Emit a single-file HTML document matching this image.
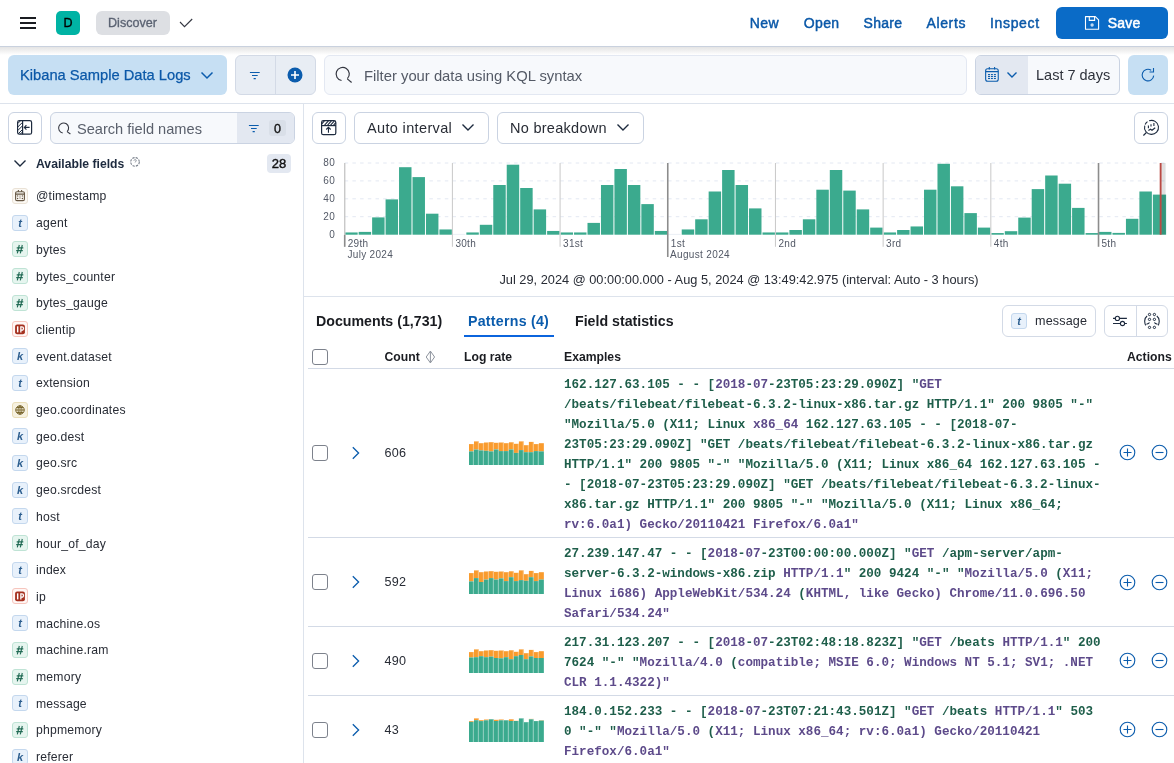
<!DOCTYPE html><html><head><meta charset="utf-8"><style>
*{box-sizing:border-box;margin:0;padding:0}
html,body{width:1174px;height:763px;overflow:hidden;background:#fff;font-family:"Liberation Sans", sans-serif;color:#1D2A3E}
.a{position:absolute}
#root{position:absolute;left:0;top:0;width:1174px;height:763px;overflow:hidden;will-change:transform;background:#fff}
.t{position:absolute;white-space:pre;line-height:1}
.btn{position:absolute;border:1px solid #CAD3E2;border-radius:6px;background:#fff}
.mono{font-family:"Liberation Mono", monospace;font-weight:700;font-size:12.6px;line-height:20px;white-space:pre;color:#1E5E4A}
.mono b{color:#5D4A8A;font-weight:700}
</style></head><body><div id="root"><div class="a" style="left:0;top:0;width:1174px;height:46px;background:#fff"></div>
<div class="a" style="left:20px;top:17.0px;width:16.3px;height:1.8px;background:#1A1C21"></div>
<div class="a" style="left:20px;top:22.1px;width:16.3px;height:1.8px;background:#1A1C21"></div>
<div class="a" style="left:20px;top:27.2px;width:16.3px;height:1.8px;background:#1A1C21"></div>
<div class="a" style="left:56px;top:11px;width:24px;height:24px;border-radius:5px;background:#00B3A4"></div>
<div class="t" style="left:56px;top:17px;width:24px;text-align:center;font-size:12.5px;-webkit-text-stroke:0.35px #000;color:#000">D</div>
<div class="a" style="left:96px;top:11px;width:74px;height:24px;border-radius:6px;background:#DDDFE3"></div>
<div class="t" style="left:108px;top:17px;font-size:12.6px;-webkit-text-stroke:0.3px #5A6272;color:#5A6272">Discover</div>
<svg class="a" style="left:178px;top:16px" width="16" height="14" viewBox="0 0 16 14"><path d="M2 6 L6.5 10.6 L14.2 3" fill="none" stroke="#343741" stroke-width="1.1"/></svg>
<div class="t" style="left:749.7px;top:16px;font-size:14px;letter-spacing:0.45px;-webkit-text-stroke:0.45px #0A58A8;color:#0A58A8">New</div>
<div class="t" style="left:803.7px;top:16px;font-size:14px;letter-spacing:0.4px;-webkit-text-stroke:0.45px #0A58A8;color:#0A58A8">Open</div>
<div class="t" style="left:863.5px;top:16px;font-size:14px;letter-spacing:0.3px;-webkit-text-stroke:0.45px #0A58A8;color:#0A58A8">Share</div>
<div class="t" style="left:926.4000000000001px;top:16px;font-size:14px;letter-spacing:0.65px;-webkit-text-stroke:0.45px #0A58A8;color:#0A58A8">Alerts</div>
<div class="t" style="left:990.0px;top:16px;font-size:14px;letter-spacing:0.65px;-webkit-text-stroke:0.45px #0A58A8;color:#0A58A8">Inspect</div>
<div class="a" style="left:1056px;top:7px;width:112px;height:32px;border-radius:6px;background:#0A6BC7"></div>
<svg class="a" style="left:1084px;top:15px" width="16" height="16" viewBox="0 0 16 16"><path d="M1.5 1.6H11.3L14.6 4.9V14.3H1.5Z" fill="none" stroke="#fff" stroke-width="1.1" stroke-linejoin="round"/><path d="M5.3 1.6V5.4H10.6V1.6" fill="none" stroke="#fff" stroke-width="1.1"/><circle cx="8.1" cy="10" r="1.7" fill="#fff" fill-opacity="0.75"/></svg>
<div class="t" style="left:1107.7px;top:16px;font-size:14px;letter-spacing:0.2px;-webkit-text-stroke:0.5px #fff;color:#fff">Save</div>
<div class="a" style="left:0;top:46px;width:1174px;height:1px;background:#C9D1DE"></div>
<div class="a" style="left:0;top:47px;width:1174px;height:8px;background:linear-gradient(#E4E4E4,#FFFFFF)"></div>
<div class="a" style="left:8px;top:55px;width:219px;height:40px;border-radius:6px;background:#C6DFF3"></div>
<div class="t" style="left:20px;top:68px;font-size:14.7px;color:#0B58A8;-webkit-text-stroke:0.25px #0B58A8">Kibana Sample Data Logs</div>
<svg class="a" style="left:200px;top:70px" width="14" height="10" viewBox="0 0 14 10"><path d="M1.5 2.5 L7 8 L12.5 2.5" fill="none" stroke="#0B5CAD" stroke-width="1.5"/></svg>
<div class="a" style="left:235px;top:55px;width:81px;height:40px;border-radius:6px;background:#E8EDF4;border:1px solid #D3DAE6"></div>
<div class="a" style="left:275px;top:56px;width:1px;height:38px;background:#D3DAE6"></div>
<svg class="a" style="left:249px;top:71px" width="12" height="10" viewBox="0 0 12 10"><path d="M0.9 1.5h9.8M3 4.5h5.7M4.6 7.6h2.2" stroke="#0B5CAD" stroke-width="1.1"/></svg>
<svg class="a" style="left:287px;top:67px" width="16" height="16" viewBox="0 0 16 16"><circle cx="8" cy="8" r="7.5" fill="#0B5CAD"/><path d="M8 4v8M4 8h8" stroke="#fff" stroke-width="1.6"/></svg>
<div class="a" style="left:324px;top:55px;width:643px;height:40px;border-radius:6px;background:#F7F9FC;border:1px solid #E3E8F2"></div>
<svg class="a" style="left:334px;top:66px" width="20" height="20" viewBox="0 0 20 20"><path d="M7.55 14.5 A6.6 6.6 0 1 1 13.37 12.67" fill="none" stroke="#343741" stroke-width="1.2"/><path d="M13.3 12.9 L17.6 16.5" stroke="#343741" stroke-width="1.2"/></svg>
<div class="t" style="left:364px;top:69px;font-size:14.8px;color:#545A66">Filter your data using KQL syntax</div>
<div class="a" style="left:975px;top:55px;width:145px;height:40px;border-radius:6px;background:#F7F9FC;border:1px solid #CAD3E2;overflow:hidden"><div class="a" style="left:0;top:0;width:52px;height:38px;background:#E3E8F1"></div></div>
<svg class="a" style="left:984px;top:66px" width="16" height="17" viewBox="0 0 16 17"><rect x="1.65" y="2.75" width="12.6" height="12.5" rx="2" fill="none" stroke="#0B5CAD" stroke-width="1.1"/><path d="M1.65 5.6h12.6M5.3 1v2.6M10.6 1v2.6" stroke="#0B5CAD" stroke-width="1.1"/><rect x="4.0" y="8.05" width="2" height="1.1" fill="#0B5CAD"/><rect x="6.9" y="8.05" width="2" height="1.1" fill="#0B5CAD"/><rect x="9.9" y="8.05" width="2" height="1.1" fill="#0B5CAD"/><rect x="4.0" y="9.95" width="2" height="1.1" fill="#0B5CAD"/><rect x="6.9" y="9.95" width="2" height="1.1" fill="#0B5CAD"/><rect x="9.9" y="9.95" width="2" height="1.1" fill="#0B5CAD"/><rect x="4.0" y="11.95" width="2" height="1.1" fill="#0B5CAD"/><rect x="6.9" y="11.95" width="2" height="1.1" fill="#0B5CAD"/><rect x="9.9" y="11.95" width="2" height="1.1" fill="#0B5CAD"/></svg>
<svg class="a" style="left:1006px;top:71px" width="12" height="8" viewBox="0 0 12 8"><path d="M1.5 1.5 L6 6 L10.5 1.5" fill="none" stroke="#0B5CAD" stroke-width="1.4"/></svg>
<div class="t" style="left:1036px;top:68px;font-size:14.5px;color:#2E323B">Last 7 days</div>
<div class="a" style="left:1128px;top:55px;width:40px;height:40px;border-radius:6px;background:#C6DFF3"></div>
<svg class="a" style="left:1140px;top:67px" width="16" height="16" viewBox="0 0 16 16"><path d="M13.7 8.6A5.8 5.8 0 1 1 11.2 3.3" fill="none" stroke="#0B5CAD" stroke-width="1.1"/><path d="M13.5 1.1V5H9.5" fill="none" stroke="#0B5CAD" stroke-width="1.1"/></svg>
<div class="a" style="left:0;top:103px;width:1174px;height:1px;background:#DDE3EC"></div>
<div class="a" style="left:303px;top:104px;width:1px;height:659px;background:#DDE3EC"></div>
<div class="btn" style="left:8px;top:112px;width:34px;height:32px"></div>
<svg class="a" style="left:16px;top:119px" width="18" height="18" viewBox="0 0 18 18"><rect x="1.6" y="1.6" width="14" height="13.6" rx="1.8" fill="none" stroke="#1D2A3E" stroke-width="1.2"/><path d="M6.6 1.6v13.6" stroke="#1D2A3E" stroke-width="1.2"/><path d="M1.8 4.5l2.5-2.5M1.8 8l4.5-4.5M1.8 11.5l4.5-4.5M2.2 14.8l4.1-4.1M4.5 14.9l1.8-1.8" stroke="#1D2A3E" stroke-width="1"/><path d="M13.6 8.4H8.3M10.4 6.2L8.3 8.4l2.1 2.2" fill="none" stroke="#1D2A3E" stroke-width="1.1"/></svg>
<div class="a" style="left:50px;top:112px;width:245px;height:32px;border-radius:6px;background:#F7F9FC;border:1px solid #CAD3E2;overflow:hidden"><div class="a" style="left:186px;top:0;width:58px;height:30px;background:#E3E8F1"></div></div>
<svg class="a" style="left:57px;top:120px" width="15" height="15" viewBox="0 0 15 15"><path d="M5.73 12.92 A5 5 0 1 1 10.14 11.54" fill="none" stroke="#343741" stroke-width="1.1"/><path d="M10.1 11.6 L13.4 14" stroke="#343741" stroke-width="1.1"/></svg>
<div class="t" style="left:77px;top:122px;font-size:14.6px;color:#5A606C">Search field names</div>
<svg class="a" style="left:248px;top:124px" width="12" height="10" viewBox="0 0 12 10"><path d="M0.9 1.5h9.8M3 4.5h5.7M4.6 7.6h2.2" stroke="#0B5CAD" stroke-width="1.1"/></svg>
<div class="a" style="left:269px;top:120px;width:17px;height:16px;border-radius:3px;background:#D9DFE8"></div>
<div class="t" style="left:269px;top:122.5px;width:17px;text-align:center;font-size:12.5px;-webkit-text-stroke:0.35px #111;color:#111">0</div>
<svg class="a" style="left:13px;top:158px" width="14" height="10" viewBox="0 0 14 10"><path d="M1.5 2.5 L7 8 L12.5 2.5" fill="none" stroke="#1D2A3E" stroke-width="1.4"/></svg>
<div class="t" style="left:36px;top:158px;font-size:12.2px;font-weight:700;color:#1D2A3E">Available fields</div>
<svg class="a" style="left:130px;top:157px" width="10" height="10" viewBox="0 0 10 10"><circle cx="5" cy="4.9" r="4.3" fill="none" stroke="#7A818C" stroke-width="1.1" stroke-dasharray="2.3 1.1"/><path d="M3.9 3.6c0.2-1.3 2.4-1.3 2.3 0.1 0 0.8-1 0.9-1 1.7" fill="none" stroke="#7A818C" stroke-width="0.9"/></svg>
<div class="a" style="left:267px;top:154px;width:24px;height:19px;border-radius:4px;background:#E3E8F1"></div>
<div class="t" style="left:267px;top:157.2px;width:24px;text-align:center;font-size:13px;-webkit-text-stroke:0.4px #111;color:#111">28</div>
<div class="a" style="left:12px;top:187.9px;width:16px;height:16px;border-radius:3px;background:#FBF8F3;border:1px solid #EAE2D6"></div><svg class="a" style="left:12px;top:187.9px" width="16" height="16" viewBox="0 0 16 16"><rect x="3.6" y="3.7" width="8.8" height="8.9" rx="1.4" fill="none" stroke="#665744" stroke-width="1.1"/><path d="M3.6 6.1H12.4M6.4 2.1V3.8M9.6 2.1V3.8" stroke="#665744" stroke-width="1.1"/><circle cx="5.6" cy="7.9" r="0.7" fill="#665744"/><circle cx="10.4" cy="7.9" r="0.7" fill="#665744"/><circle cx="5.6" cy="10.5" r="0.7" fill="#665744"/><circle cx="10.4" cy="10.5" r="0.7" fill="#665744"/><rect x="7.3" y="7.2" width="1.4" height="3.8" fill="#C2BAAF"/></svg>
<div class="t" style="left:36px;top:190.4px;font-size:12.2px;letter-spacing:0.2px;color:#282C35">@timestamp</div>
<div class="a" style="left:12px;top:214.6px;width:16px;height:16px;border-radius:3px;background:#E8F1FB;border:1px solid #C4D8EE"></div><div class="t" style="left:12px;top:217.6px;width:16px;text-align:center;font-size:11px;font-weight:700;font-style:italic;color:#2C5E8F">t</div>
<div class="t" style="left:36px;top:217.1px;font-size:12.2px;letter-spacing:0.2px;color:#282C35">agent</div>
<div class="a" style="left:12px;top:241.3px;width:16px;height:16px;border-radius:3px;background:#E6F5EF;border:1px solid #BFE3D5"></div><svg class="a" style="left:12px;top:241.3px" width="16" height="16" viewBox="0 0 16 16"><path d="M7.3 4L5.3 12.3M10.3 4L8.3 12.3M4.7 6.8H11.3M4.2 9.6H10.8" stroke="#226B55" stroke-width="1.15"/></svg>
<div class="t" style="left:36px;top:243.8px;font-size:12.2px;letter-spacing:0.2px;color:#282C35">bytes</div>
<div class="a" style="left:12px;top:268.0px;width:16px;height:16px;border-radius:3px;background:#E6F5EF;border:1px solid #BFE3D5"></div><svg class="a" style="left:12px;top:268.0px" width="16" height="16" viewBox="0 0 16 16"><path d="M7.3 4L5.3 12.3M10.3 4L8.3 12.3M4.7 6.8H11.3M4.2 9.6H10.8" stroke="#226B55" stroke-width="1.15"/></svg>
<div class="t" style="left:36px;top:270.5px;font-size:12.2px;letter-spacing:0.2px;color:#282C35">bytes_counter</div>
<div class="a" style="left:12px;top:294.7px;width:16px;height:16px;border-radius:3px;background:#E6F5EF;border:1px solid #BFE3D5"></div><svg class="a" style="left:12px;top:294.7px" width="16" height="16" viewBox="0 0 16 16"><path d="M7.3 4L5.3 12.3M10.3 4L8.3 12.3M4.7 6.8H11.3M4.2 9.6H10.8" stroke="#226B55" stroke-width="1.15"/></svg>
<div class="t" style="left:36px;top:297.2px;font-size:12.2px;letter-spacing:0.2px;color:#282C35">bytes_gauge</div>
<div class="a" style="left:12px;top:321.4px;width:16px;height:16px;border-radius:3px;background:#FFF6F4;border:1px solid #F6C5BD"></div><svg class="a" style="left:12px;top:321.4px" width="16" height="16" viewBox="0 0 16 16"><rect x="3.1" y="3.6" width="9.8" height="9.7" rx="2" fill="#A5301F"/><rect x="4.95" y="5.3" width="1.45" height="6.1" fill="#fff"/><path d="M8.85 11.4V5.95H9.9A1.6 1.6 0 0 1 9.9 9.15H8.85" fill="none" stroke="#fff" stroke-width="1.3"/></svg>
<div class="t" style="left:36px;top:323.9px;font-size:12.2px;letter-spacing:0.2px;color:#282C35">clientip</div>
<div class="a" style="left:12px;top:348.1px;width:16px;height:16px;border-radius:3px;background:#E8F1FB;border:1px solid #C4D8EE"></div><div class="t" style="left:12px;top:351.1px;width:16px;text-align:center;font-size:11px;font-weight:700;font-style:italic;color:#2C5E8F">k</div>
<div class="t" style="left:36px;top:350.6px;font-size:12.2px;letter-spacing:0.2px;color:#282C35">event.dataset</div>
<div class="a" style="left:12px;top:374.8px;width:16px;height:16px;border-radius:3px;background:#E8F1FB;border:1px solid #C4D8EE"></div><div class="t" style="left:12px;top:377.8px;width:16px;text-align:center;font-size:11px;font-weight:700;font-style:italic;color:#2C5E8F">t</div>
<div class="t" style="left:36px;top:377.3px;font-size:12.2px;letter-spacing:0.2px;color:#282C35">extension</div>
<div class="a" style="left:12px;top:401.5px;width:16px;height:16px;border-radius:3px;background:#F6F1E0;border:1px solid #E9DDB8"></div><svg class="a" style="left:15px;top:404.5px" width="10" height="10" viewBox="0 0 10 10"><circle cx="5" cy="5" r="4.2" fill="none" stroke="#6F5A1E" stroke-width="1"/><path d="M0.8 5h8.4M5 0.8v8.4M2 2.5h6M2 7.5h6" stroke="#6F5A1E" stroke-width="0.8"/><ellipse cx="5" cy="5" rx="2" ry="4.2" fill="none" stroke="#6F5A1E" stroke-width="0.8"/></svg>
<div class="t" style="left:36px;top:404.0px;font-size:12.2px;letter-spacing:0.2px;color:#282C35">geo.coordinates</div>
<div class="a" style="left:12px;top:428.2px;width:16px;height:16px;border-radius:3px;background:#E8F1FB;border:1px solid #C4D8EE"></div><div class="t" style="left:12px;top:431.2px;width:16px;text-align:center;font-size:11px;font-weight:700;font-style:italic;color:#2C5E8F">k</div>
<div class="t" style="left:36px;top:430.7px;font-size:12.2px;letter-spacing:0.2px;color:#282C35">geo.dest</div>
<div class="a" style="left:12px;top:454.9px;width:16px;height:16px;border-radius:3px;background:#E8F1FB;border:1px solid #C4D8EE"></div><div class="t" style="left:12px;top:457.9px;width:16px;text-align:center;font-size:11px;font-weight:700;font-style:italic;color:#2C5E8F">k</div>
<div class="t" style="left:36px;top:457.4px;font-size:12.2px;letter-spacing:0.2px;color:#282C35">geo.src</div>
<div class="a" style="left:12px;top:481.6px;width:16px;height:16px;border-radius:3px;background:#E8F1FB;border:1px solid #C4D8EE"></div><div class="t" style="left:12px;top:484.6px;width:16px;text-align:center;font-size:11px;font-weight:700;font-style:italic;color:#2C5E8F">k</div>
<div class="t" style="left:36px;top:484.1px;font-size:12.2px;letter-spacing:0.2px;color:#282C35">geo.srcdest</div>
<div class="a" style="left:12px;top:508.3px;width:16px;height:16px;border-radius:3px;background:#E8F1FB;border:1px solid #C4D8EE"></div><div class="t" style="left:12px;top:511.3px;width:16px;text-align:center;font-size:11px;font-weight:700;font-style:italic;color:#2C5E8F">t</div>
<div class="t" style="left:36px;top:510.8px;font-size:12.2px;letter-spacing:0.2px;color:#282C35">host</div>
<div class="a" style="left:12px;top:535.0px;width:16px;height:16px;border-radius:3px;background:#E6F5EF;border:1px solid #BFE3D5"></div><svg class="a" style="left:12px;top:535.0px" width="16" height="16" viewBox="0 0 16 16"><path d="M7.3 4L5.3 12.3M10.3 4L8.3 12.3M4.7 6.8H11.3M4.2 9.6H10.8" stroke="#226B55" stroke-width="1.15"/></svg>
<div class="t" style="left:36px;top:537.5px;font-size:12.2px;letter-spacing:0.2px;color:#282C35">hour_of_day</div>
<div class="a" style="left:12px;top:561.7px;width:16px;height:16px;border-radius:3px;background:#E8F1FB;border:1px solid #C4D8EE"></div><div class="t" style="left:12px;top:564.7px;width:16px;text-align:center;font-size:11px;font-weight:700;font-style:italic;color:#2C5E8F">t</div>
<div class="t" style="left:36px;top:564.2px;font-size:12.2px;letter-spacing:0.2px;color:#282C35">index</div>
<div class="a" style="left:12px;top:588.4px;width:16px;height:16px;border-radius:3px;background:#FFF6F4;border:1px solid #F6C5BD"></div><svg class="a" style="left:12px;top:588.4px" width="16" height="16" viewBox="0 0 16 16"><rect x="3.1" y="3.6" width="9.8" height="9.7" rx="2" fill="#A5301F"/><rect x="4.95" y="5.3" width="1.45" height="6.1" fill="#fff"/><path d="M8.85 11.4V5.95H9.9A1.6 1.6 0 0 1 9.9 9.15H8.85" fill="none" stroke="#fff" stroke-width="1.3"/></svg>
<div class="t" style="left:36px;top:590.9px;font-size:12.2px;letter-spacing:0.2px;color:#282C35">ip</div>
<div class="a" style="left:12px;top:615.1px;width:16px;height:16px;border-radius:3px;background:#E8F1FB;border:1px solid #C4D8EE"></div><div class="t" style="left:12px;top:618.1px;width:16px;text-align:center;font-size:11px;font-weight:700;font-style:italic;color:#2C5E8F">t</div>
<div class="t" style="left:36px;top:617.6px;font-size:12.2px;letter-spacing:0.2px;color:#282C35">machine.os</div>
<div class="a" style="left:12px;top:641.8px;width:16px;height:16px;border-radius:3px;background:#E6F5EF;border:1px solid #BFE3D5"></div><svg class="a" style="left:12px;top:641.8px" width="16" height="16" viewBox="0 0 16 16"><path d="M7.3 4L5.3 12.3M10.3 4L8.3 12.3M4.7 6.8H11.3M4.2 9.6H10.8" stroke="#226B55" stroke-width="1.15"/></svg>
<div class="t" style="left:36px;top:644.3px;font-size:12.2px;letter-spacing:0.2px;color:#282C35">machine.ram</div>
<div class="a" style="left:12px;top:668.5px;width:16px;height:16px;border-radius:3px;background:#E6F5EF;border:1px solid #BFE3D5"></div><svg class="a" style="left:12px;top:668.5px" width="16" height="16" viewBox="0 0 16 16"><path d="M7.3 4L5.3 12.3M10.3 4L8.3 12.3M4.7 6.8H11.3M4.2 9.6H10.8" stroke="#226B55" stroke-width="1.15"/></svg>
<div class="t" style="left:36px;top:671.0px;font-size:12.2px;letter-spacing:0.2px;color:#282C35">memory</div>
<div class="a" style="left:12px;top:695.2px;width:16px;height:16px;border-radius:3px;background:#E8F1FB;border:1px solid #C4D8EE"></div><div class="t" style="left:12px;top:698.2px;width:16px;text-align:center;font-size:11px;font-weight:700;font-style:italic;color:#2C5E8F">t</div>
<div class="t" style="left:36px;top:697.7px;font-size:12.2px;letter-spacing:0.2px;color:#282C35">message</div>
<div class="a" style="left:12px;top:721.9px;width:16px;height:16px;border-radius:3px;background:#E6F5EF;border:1px solid #BFE3D5"></div><svg class="a" style="left:12px;top:721.9px" width="16" height="16" viewBox="0 0 16 16"><path d="M7.3 4L5.3 12.3M10.3 4L8.3 12.3M4.7 6.8H11.3M4.2 9.6H10.8" stroke="#226B55" stroke-width="1.15"/></svg>
<div class="t" style="left:36px;top:724.4px;font-size:12.2px;letter-spacing:0.2px;color:#282C35">phpmemory</div>
<div class="a" style="left:12px;top:748.6px;width:16px;height:16px;border-radius:3px;background:#E8F1FB;border:1px solid #C4D8EE"></div><div class="t" style="left:12px;top:751.6px;width:16px;text-align:center;font-size:11px;font-weight:700;font-style:italic;color:#2C5E8F">k</div>
<div class="t" style="left:36px;top:751.1px;font-size:12.2px;letter-spacing:0.2px;color:#282C35">referer</div>
<div class="btn" style="left:312px;top:112px;width:34px;height:32px"></div>
<svg class="a" style="left:320px;top:119px" width="18" height="18" viewBox="0 0 18 18"><rect x="1.6" y="1.6" width="14.2" height="14.1" rx="1.8" fill="none" stroke="#1D2A3E" stroke-width="1.2"/><path d="M1.6 6.6H15.8" stroke="#1D2A3E" stroke-width="1.2"/><path d="M1.8 4.8l2.6-2.9M4.6 6.2l3.8-4.3M7.6 6.2l3.8-4.3M10.6 6.2l3.8-4.3M13.6 6.2l2.2-2.5" stroke="#1D2A3E" stroke-width="1.1"/><path d="M8.45 13.7V8.4M6.2 10.5l2.25-2.25 2.25 2.25" fill="none" stroke="#1D2A3E" stroke-width="1.1"/></svg>
<div class="btn" style="left:354px;top:112px;width:135px;height:32px"></div>
<div class="t" style="left:367px;top:121px;font-size:14.5px;letter-spacing:0.35px;color:#282C35">Auto interval</div>
<svg class="a" style="left:461px;top:123px" width="14" height="9" viewBox="0 0 14 9"><path d="M1.5 1.5 L7 7 L12.5 1.5" fill="none" stroke="#1D2A3E" stroke-width="1.4"/></svg>
<div class="btn" style="left:497px;top:112px;width:147px;height:32px"></div>
<div class="t" style="left:510px;top:121px;font-size:14.5px;letter-spacing:0.28px;color:#282C35">No breakdown</div>
<svg class="a" style="left:616px;top:123px" width="14" height="9" viewBox="0 0 14 9"><path d="M1.5 1.5 L7 7 L12.5 1.5" fill="none" stroke="#1D2A3E" stroke-width="1.4"/></svg>
<div class="btn" style="left:1134px;top:112px;width:34px;height:32px"></div>
<svg class="a" style="left:1140px;top:116px" width="20" height="20" viewBox="0 0 20 20"><path d="M9.11 4.82 A7 7 0 1 1 4.74 9.59 M5.16 8.44 A7 7 0 0 1 7.48 5.67" fill="none" stroke="#1D2A3E" stroke-width="1.1"/><path d="M6.4 16.5L3.4 19.5" stroke="#1D2A3E" stroke-width="1.1"/><path d="M8.4 9.6v2.6M11 8.3v2.3M13.9 7v3.1" stroke="#1D2A3E" stroke-width="1.1"/><path d="M8.4 14.5L10.5 13.2L12 14.3L15.2 11.7" fill="none" stroke="#1D2A3E" stroke-width="1.1"/></svg>
<svg class="a" style="left:0;top:0" width="1174" height="300" viewBox="0 0 1174 300"><line x1="344.7" y1="163" x2="1166" y2="163" stroke="#E3E8F2" stroke-width="1" stroke-dasharray="3.5 4.2"/><line x1="344.7" y1="180.9" x2="1166" y2="180.9" stroke="#E3E8F2" stroke-width="1" stroke-dasharray="3.5 4.2"/><line x1="344.7" y1="198.8" x2="1166" y2="198.8" stroke="#E3E8F2" stroke-width="1" stroke-dasharray="3.5 4.2"/><line x1="344.7" y1="216.7" x2="1166" y2="216.7" stroke="#E3E8F2" stroke-width="1" stroke-dasharray="3.5 4.2"/><rect x="345.20" y="232.45" width="12.46" height="2.25" fill="#3BAA8E"/><rect x="358.66" y="231.90" width="12.46" height="2.80" fill="#3BAA8E"/><rect x="372.12" y="217.40" width="12.46" height="17.30" fill="#3BAA8E"/><rect x="385.58" y="199.40" width="12.46" height="35.30" fill="#3BAA8E"/><rect x="399.04" y="167.20" width="12.46" height="67.50" fill="#3BAA8E"/><rect x="412.50" y="177.10" width="12.46" height="57.60" fill="#3BAA8E"/><rect x="425.97" y="213.70" width="12.46" height="21.00" fill="#3BAA8E"/><rect x="439.43" y="229.45" width="12.46" height="5.25" fill="#3BAA8E"/><rect x="452.89" y="233.90" width="12.46" height="0.80" fill="#E6EBF2"/><rect x="466.35" y="232.45" width="12.46" height="2.25" fill="#3BAA8E"/><rect x="479.81" y="224.80" width="12.46" height="9.90" fill="#3BAA8E"/><rect x="493.27" y="185.00" width="12.46" height="49.70" fill="#3BAA8E"/><rect x="506.73" y="164.70" width="12.46" height="70.00" fill="#3BAA8E"/><rect x="520.19" y="188.00" width="12.46" height="46.70" fill="#3BAA8E"/><rect x="533.65" y="209.40" width="12.46" height="25.30" fill="#3BAA8E"/><rect x="547.12" y="230.95" width="12.46" height="3.75" fill="#3BAA8E"/><rect x="560.58" y="232.45" width="12.46" height="2.25" fill="#3BAA8E"/><rect x="574.04" y="232.45" width="12.46" height="2.25" fill="#3BAA8E"/><rect x="587.50" y="222.90" width="12.46" height="11.80" fill="#3BAA8E"/><rect x="600.96" y="185.00" width="12.46" height="49.70" fill="#3BAA8E"/><rect x="614.42" y="169.00" width="12.46" height="65.70" fill="#3BAA8E"/><rect x="627.88" y="185.00" width="12.46" height="49.70" fill="#3BAA8E"/><rect x="641.34" y="204.10" width="12.46" height="30.60" fill="#3BAA8E"/><rect x="654.80" y="230.95" width="12.46" height="3.75" fill="#3BAA8E"/><rect x="668.26" y="233.90" width="12.46" height="0.80" fill="#E6EBF2"/><rect x="681.73" y="229.45" width="12.46" height="5.25" fill="#3BAA8E"/><rect x="695.19" y="219.30" width="12.46" height="15.40" fill="#3BAA8E"/><rect x="708.65" y="191.50" width="12.46" height="43.20" fill="#3BAA8E"/><rect x="722.11" y="170.00" width="12.46" height="64.70" fill="#3BAA8E"/><rect x="735.57" y="185.00" width="12.46" height="49.70" fill="#3BAA8E"/><rect x="749.03" y="208.40" width="12.46" height="26.30" fill="#3BAA8E"/><rect x="762.49" y="232.45" width="12.46" height="2.25" fill="#3BAA8E"/><rect x="775.95" y="232.45" width="12.46" height="2.25" fill="#3BAA8E"/><rect x="789.41" y="230.00" width="12.46" height="4.70" fill="#3BAA8E"/><rect x="802.87" y="219.30" width="12.46" height="15.40" fill="#3BAA8E"/><rect x="816.34" y="189.70" width="12.46" height="45.00" fill="#3BAA8E"/><rect x="829.80" y="170.00" width="12.46" height="64.70" fill="#3BAA8E"/><rect x="843.26" y="190.60" width="12.46" height="44.10" fill="#3BAA8E"/><rect x="856.72" y="209.40" width="12.46" height="25.30" fill="#3BAA8E"/><rect x="870.18" y="227.60" width="12.46" height="7.10" fill="#3BAA8E"/><rect x="883.64" y="232.45" width="12.46" height="2.25" fill="#3BAA8E"/><rect x="897.10" y="230.00" width="12.46" height="4.70" fill="#3BAA8E"/><rect x="910.56" y="226.45" width="12.46" height="8.25" fill="#3BAA8E"/><rect x="924.02" y="189.70" width="12.46" height="45.00" fill="#3BAA8E"/><rect x="937.48" y="163.80" width="12.46" height="70.90" fill="#3BAA8E"/><rect x="950.94" y="186.30" width="12.46" height="48.40" fill="#3BAA8E"/><rect x="964.41" y="213.10" width="12.46" height="21.60" fill="#3BAA8E"/><rect x="977.87" y="227.60" width="12.46" height="7.10" fill="#3BAA8E"/><rect x="991.33" y="233.06" width="12.46" height="1.64" fill="#3BAA8E"/><rect x="1004.79" y="231.20" width="12.46" height="3.50" fill="#3BAA8E"/><rect x="1018.25" y="217.60" width="12.46" height="17.10" fill="#3BAA8E"/><rect x="1031.71" y="189.10" width="12.46" height="45.60" fill="#3BAA8E"/><rect x="1045.17" y="175.50" width="12.46" height="59.20" fill="#3BAA8E"/><rect x="1058.63" y="183.70" width="12.46" height="51.00" fill="#3BAA8E"/><rect x="1072.09" y="207.90" width="12.46" height="26.80" fill="#3BAA8E"/><rect x="1085.56" y="233.06" width="12.46" height="1.64" fill="#3BAA8E"/><rect x="1099.02" y="231.90" width="12.46" height="2.80" fill="#3BAA8E"/><rect x="1112.48" y="232.90" width="12.46" height="1.80" fill="#3BAA8E"/><rect x="1125.94" y="218.80" width="12.46" height="15.90" fill="#3BAA8E"/><rect x="1139.40" y="191.50" width="12.46" height="43.20" fill="#3BAA8E"/><rect x="1152.86" y="194.60" width="13.24" height="40.10" fill="#3BAA8E"/><line x1="344.70" y1="163" x2="344.70" y2="246.8" stroke="#C8C8C8" stroke-width="1"/><line x1="344.70" y1="234.7" x2="344.70" y2="246.8" stroke="#8C8C8C" stroke-width="1.6"/><line x1="452.39" y1="163" x2="452.39" y2="246.8" stroke="#C8C8C8" stroke-width="1"/><line x1="560.08" y1="163" x2="560.08" y2="246.8" stroke="#C8C8C8" stroke-width="1"/><line x1="667.76" y1="163" x2="667.76" y2="257" stroke="#8C8C8C" stroke-width="1.6"/><line x1="775.45" y1="163" x2="775.45" y2="246.8" stroke="#C8C8C8" stroke-width="1"/><line x1="883.14" y1="163" x2="883.14" y2="246.8" stroke="#C8C8C8" stroke-width="1"/><line x1="990.83" y1="163" x2="990.83" y2="246.8" stroke="#C8C8C8" stroke-width="1"/><line x1="1098.52" y1="163" x2="1098.52" y2="246.8" stroke="#8C8C8C" stroke-width="1.6"/><line x1="344.7" y1="163" x2="344.7" y2="234.7" stroke="#C8C8C8" stroke-width="1.2"/><rect x="1161.6" y="163" width="4" height="71.7" fill="#000" fill-opacity="0.12"/><rect x="1159.7" y="163" width="1.9" height="71.7" fill="#B84A44"/></svg>
<div class="t" style="left:347.7px;top:239.4px;font-size:10px;letter-spacing:0.3px;color:#535966">29th</div>
<div class="t" style="left:455.4px;top:239.4px;font-size:10px;letter-spacing:0.3px;color:#535966">30th</div>
<div class="t" style="left:563.1px;top:239.4px;font-size:10px;letter-spacing:0.3px;color:#535966">31st</div>
<div class="t" style="left:670.8px;top:239.4px;font-size:10px;letter-spacing:0.3px;color:#535966">1st</div>
<div class="t" style="left:778.5px;top:239.4px;font-size:10px;letter-spacing:0.3px;color:#535966">2nd</div>
<div class="t" style="left:886.1px;top:239.4px;font-size:10px;letter-spacing:0.3px;color:#535966">3rd</div>
<div class="t" style="left:993.8px;top:239.4px;font-size:10px;letter-spacing:0.3px;color:#535966">4th</div>
<div class="t" style="left:1101.5px;top:239.4px;font-size:10px;letter-spacing:0.3px;color:#535966">5th</div>
<div class="t" style="left:347.5px;top:249.7px;font-size:10px;letter-spacing:0.3px;color:#535966">July 2024</div>
<div class="t" style="left:670px;top:249.7px;font-size:10px;letter-spacing:0.35px;color:#535966">August 2024</div>
<div class="t" style="left:305px;top:158.1px;width:30px;text-align:right;font-size:10px;letter-spacing:0.3px;color:#535966">80</div>
<div class="t" style="left:305px;top:176.1px;width:30px;text-align:right;font-size:10px;letter-spacing:0.3px;color:#535966">60</div>
<div class="t" style="left:305px;top:194.0px;width:30px;text-align:right;font-size:10px;letter-spacing:0.3px;color:#535966">40</div>
<div class="t" style="left:305px;top:211.9px;width:30px;text-align:right;font-size:10px;letter-spacing:0.3px;color:#535966">20</div>
<div class="t" style="left:305px;top:229.9px;width:30px;text-align:right;font-size:10px;letter-spacing:0.3px;color:#535966">0</div>
<div class="t" style="left:499.4px;top:274px;font-size:12.8px;color:#282C35">Jul 29, 2024 @ 00:00:00.000 - Aug 5, 2024 @ 13:49:42.975 (interval: Auto - 3 hours)</div>
<div class="a" style="left:304px;top:296px;width:870px;height:1px;background:#DDE3EC"></div>
<div class="t" style="left:316px;top:314px;font-size:14.2px;font-weight:700;color:#1A1C21">Documents (1,731)</div>
<div class="t" style="left:468px;top:314px;font-size:14.2px;font-weight:700;letter-spacing:0.25px;color:#0B5CAD">Patterns (4)</div>
<div class="a" style="left:464px;top:335px;width:90px;height:2px;background:#0B64DD"></div>
<div class="t" style="left:575px;top:314px;font-size:14.2px;font-weight:700;color:#1A1C21">Field statistics</div>
<div class="btn" style="left:1002px;top:305px;width:94px;height:32px;border-color:#D3DAE6"></div>
<div class="a" style="left:1011px;top:313px;width:16px;height:16px;border-radius:3px;background:#E8F1FB;border:1px solid #C4D8EE"></div>
<div class="t" style="left:1011px;top:316px;width:16px;text-align:center;font-size:11px;font-weight:700;font-style:italic;color:#2C5E8F">t</div>
<div class="t" style="left:1035px;top:315px;font-size:12.6px;letter-spacing:0.15px;color:#282C35">message</div>
<div class="btn" style="left:1104px;top:305px;width:64px;height:32px;border-color:#D3DAE6"></div>
<div class="a" style="left:1136px;top:306px;width:1px;height:30px;background:#D3DAE6"></div>
<svg class="a" style="left:1110px;top:311px" width="20" height="20" viewBox="0 0 20 20"><path d="M3 7.4H16.9M3 12.5H16.9" stroke="#1D2A3E" stroke-width="1.1"/><circle cx="7.4" cy="7.4" r="2.1" fill="#fff" stroke="#1D2A3E" stroke-width="1.1"/><circle cx="12.5" cy="12.5" r="2.1" fill="#fff" stroke="#1D2A3E" stroke-width="1.1"/></svg>
<svg class="a" style="left:1140px;top:311px" width="20" height="20" viewBox="0 0 20 20"><g fill="none" stroke="#1D2A3E" stroke-width="1"><circle cx="9.5" cy="3.5" r="1.15"/><circle cx="14.4" cy="3.5" r="1.15"/><circle cx="9.5" cy="8.4" r="1.15"/><circle cx="14.4" cy="8.4" r="1.15"/><circle cx="9.5" cy="16.4" r="1.15"/><circle cx="14.4" cy="16.4" r="1.15"/><path d="M7.1 5C5.1 6.5 4.6 9 4.7 10.5C4.8 12.5 5.2 13.5 5.8 14.3M9.5 11.6C9 12.6 7.8 13 6.4 13.2M16.8 5C18.8 6.5 19.3 9 19.2 10.5C19.1 12.5 18.7 13.5 18.1 14.3M14.4 11.6C14.9 12.6 16.1 13 17.5 13.2" stroke-width="1.1"/></g></svg>
<div class="a" style="left:312px;top:349px;width:16px;height:16px;border-radius:3px;border:1px solid #7D828C;background:#fff"></div>
<div class="t" style="left:384.5px;top:351px;font-size:12.2px;font-weight:700;color:#1A1C21">Count</div>
<svg class="a" style="left:424px;top:349px" width="13" height="16" viewBox="0 0 13 16"><path d="M6.4 2.1L2.2 8L6.4 13.9M6.4 2.1L10.6 8L6.4 13.9M6.4 2.1V13.9" fill="none" stroke="#8E949E" stroke-width="1"/></svg>
<div class="t" style="left:464px;top:351px;font-size:12.2px;font-weight:700;color:#1A1C21">Log rate</div>
<div class="t" style="left:564px;top:351px;font-size:12.2px;font-weight:700;color:#1A1C21">Examples</div>
<div class="t" style="left:1127px;top:351px;font-size:12.2px;font-weight:700;color:#1A1C21">Actions</div>
<div class="a" style="left:308px;top:368px;width:866px;height:1px;background:#D3DAE6"></div>
<div class="a" style="left:312px;top:445px;width:16px;height:16px;border-radius:3px;border:1px solid #7D828C;background:#fff"></div>
<svg class="a" style="left:350px;top:444.9px" width="12" height="16" viewBox="0 0 12 16"><path d="M2.8 2.2 L8.6 8 L2.8 13.8" fill="none" stroke="#0B5CAD" stroke-width="1.3"/></svg>
<div class="t" style="left:384.5px;top:446.9px;font-size:12.6px;letter-spacing:0.3px;color:#282C35">606</div>
<svg class="a" style="left:469px;top:439.8px" width="76" height="25" viewBox="0 0 76 25"><rect x="0.00" y="4.10" width="4.99" height="7.30" fill="#F99B2D"/><rect x="0.00" y="11.40" width="4.99" height="13.60" fill="#3BAA8E"/><rect x="3.85" y="4.10" width="1.2" height="20.90" fill="#fff" fill-opacity="0.4"/><rect x="4.99" y="1.40" width="4.99" height="8.20" fill="#F99B2D"/><rect x="4.99" y="9.60" width="4.99" height="15.40" fill="#3BAA8E"/><rect x="8.84" y="1.40" width="1.2" height="23.60" fill="#fff" fill-opacity="0.4"/><rect x="9.98" y="3.20" width="4.99" height="7.20" fill="#F99B2D"/><rect x="9.98" y="10.40" width="4.99" height="14.60" fill="#3BAA8E"/><rect x="13.83" y="3.20" width="1.2" height="21.80" fill="#fff" fill-opacity="0.4"/><rect x="14.97" y="2.50" width="4.99" height="8.30" fill="#F99B2D"/><rect x="14.97" y="10.80" width="4.99" height="14.20" fill="#3BAA8E"/><rect x="18.82" y="2.50" width="1.2" height="22.50" fill="#fff" fill-opacity="0.4"/><rect x="19.96" y="2.20" width="4.99" height="9.20" fill="#F99B2D"/><rect x="19.96" y="11.40" width="4.99" height="13.60" fill="#3BAA8E"/><rect x="23.81" y="2.20" width="1.2" height="22.80" fill="#fff" fill-opacity="0.4"/><rect x="24.95" y="2.80" width="4.99" height="6.70" fill="#F99B2D"/><rect x="24.95" y="9.50" width="4.99" height="15.50" fill="#3BAA8E"/><rect x="28.80" y="2.80" width="1.2" height="22.20" fill="#fff" fill-opacity="0.4"/><rect x="29.94" y="2.50" width="4.99" height="8.60" fill="#F99B2D"/><rect x="29.94" y="11.10" width="4.99" height="13.90" fill="#3BAA8E"/><rect x="33.79" y="2.50" width="1.2" height="22.50" fill="#fff" fill-opacity="0.4"/><rect x="34.93" y="3.20" width="4.99" height="7.90" fill="#F99B2D"/><rect x="34.93" y="11.10" width="4.99" height="13.90" fill="#3BAA8E"/><rect x="38.78" y="3.20" width="1.2" height="21.80" fill="#fff" fill-opacity="0.4"/><rect x="39.92" y="2.30" width="4.99" height="7.20" fill="#F99B2D"/><rect x="39.92" y="9.50" width="4.99" height="15.50" fill="#3BAA8E"/><rect x="43.77" y="2.30" width="1.2" height="22.70" fill="#fff" fill-opacity="0.4"/><rect x="44.91" y="3.80" width="4.99" height="9.10" fill="#F99B2D"/><rect x="44.91" y="12.90" width="4.99" height="12.10" fill="#3BAA8E"/><rect x="48.76" y="3.80" width="1.2" height="21.20" fill="#fff" fill-opacity="0.4"/><rect x="49.90" y="1.40" width="4.99" height="8.70" fill="#F99B2D"/><rect x="49.90" y="10.10" width="4.99" height="14.90" fill="#3BAA8E"/><rect x="53.75" y="1.40" width="1.2" height="23.60" fill="#fff" fill-opacity="0.4"/><rect x="54.89" y="5.20" width="4.99" height="7.00" fill="#F99B2D"/><rect x="54.89" y="12.20" width="4.99" height="12.80" fill="#3BAA8E"/><rect x="58.74" y="5.20" width="1.2" height="19.80" fill="#fff" fill-opacity="0.4"/><rect x="59.88" y="1.90" width="4.99" height="10.30" fill="#F99B2D"/><rect x="59.88" y="12.20" width="4.99" height="12.80" fill="#3BAA8E"/><rect x="63.73" y="1.90" width="1.2" height="23.10" fill="#fff" fill-opacity="0.4"/><rect x="64.87" y="4.10" width="4.99" height="7.00" fill="#F99B2D"/><rect x="64.87" y="11.10" width="4.99" height="13.90" fill="#3BAA8E"/><rect x="68.72" y="4.10" width="1.2" height="20.90" fill="#fff" fill-opacity="0.4"/><rect x="69.86" y="3.20" width="4.99" height="8.20" fill="#F99B2D"/><rect x="69.86" y="11.40" width="4.99" height="13.60" fill="#3BAA8E"/></svg>
<div class="a mono" style="left:564px;top:374.9px">162.127.63.105 - - [<b>2018</b>-<b>07</b>-23T05:23:29.090Z] "<b>GET</b>
/beats/filebeat/filebeat-6.3.2-linux-x86.tar.gz HTTP/1.1" 200 9805 "-"
"Mozilla/5.0 (X11; Linux <b>x86_64</b> 162.127.63.105 - - [2018-07-
23T05:23:29.090Z] "GET /beats/filebeat/filebeat-6.3.2-linux-x86.tar.gz
HTTP/1.1" 200 9805 "-" "Mozilla/5.0 (X11; Linux x86_64 162.127.63.105 -
- [2018-07-23T05:23:29.090Z] "GET /beats/filebeat/filebeat-6.3.2-linux-
x86.tar.gz HTTP/1.1" 200 9805 "-" "Mozilla/5.0 (X11; Linux x86_64;
<b>rv:6.0a1) Gecko/20110421 Firefox/6.0a1"</b></div>
<svg class="a" style="left:1119px;top:444.4px" width="17" height="17" viewBox="0 0 17 17"><circle cx="8.5" cy="8.5" r="7.3" fill="none" stroke="#0B5CAD" stroke-width="1.1"/><path d="M8.5 4.5v8M4.5 8.5h8" stroke="#0B5CAD" stroke-width="1.1"/></svg>
<svg class="a" style="left:1151px;top:444.4px" width="17" height="17" viewBox="0 0 17 17"><circle cx="8.5" cy="8.5" r="7.3" fill="none" stroke="#0B5CAD" stroke-width="1.1"/><path d="M4.5 8.5h8" stroke="#0B5CAD" stroke-width="1.1"/></svg>
<div class="a" style="left:308px;top:537.0px;width:866px;height:1px;background:#D3DAE6"></div>
<div class="a" style="left:312px;top:574px;width:16px;height:16px;border-radius:3px;border:1px solid #7D828C;background:#fff"></div>
<svg class="a" style="left:350px;top:574.0px" width="12" height="16" viewBox="0 0 12 16"><path d="M2.8 2.2 L8.6 8 L2.8 13.8" fill="none" stroke="#0B5CAD" stroke-width="1.3"/></svg>
<div class="t" style="left:384.5px;top:576.0px;font-size:12.6px;letter-spacing:0.3px;color:#282C35">592</div>
<svg class="a" style="left:469px;top:568.8px" width="76" height="25" viewBox="0 0 76 25"><rect x="0.00" y="4.10" width="4.99" height="8.30" fill="#F99B2D"/><rect x="0.00" y="12.40" width="4.99" height="12.60" fill="#3BAA8E"/><rect x="3.85" y="4.10" width="1.2" height="20.90" fill="#fff" fill-opacity="0.4"/><rect x="4.99" y="1.40" width="4.99" height="7.70" fill="#F99B2D"/><rect x="4.99" y="9.10" width="4.99" height="15.90" fill="#3BAA8E"/><rect x="8.84" y="1.40" width="1.2" height="23.60" fill="#fff" fill-opacity="0.4"/><rect x="9.98" y="3.20" width="4.99" height="9.80" fill="#F99B2D"/><rect x="9.98" y="13.00" width="4.99" height="12.00" fill="#3BAA8E"/><rect x="13.83" y="3.20" width="1.2" height="21.80" fill="#fff" fill-opacity="0.4"/><rect x="14.97" y="2.50" width="4.99" height="8.10" fill="#F99B2D"/><rect x="14.97" y="10.60" width="4.99" height="14.40" fill="#3BAA8E"/><rect x="18.82" y="2.50" width="1.2" height="22.50" fill="#fff" fill-opacity="0.4"/><rect x="19.96" y="2.20" width="4.99" height="6.90" fill="#F99B2D"/><rect x="19.96" y="9.10" width="4.99" height="15.90" fill="#3BAA8E"/><rect x="23.81" y="2.20" width="1.2" height="22.80" fill="#fff" fill-opacity="0.4"/><rect x="24.95" y="2.80" width="4.99" height="7.80" fill="#F99B2D"/><rect x="24.95" y="10.60" width="4.99" height="14.40" fill="#3BAA8E"/><rect x="28.80" y="2.80" width="1.2" height="22.20" fill="#fff" fill-opacity="0.4"/><rect x="29.94" y="2.50" width="4.99" height="6.90" fill="#F99B2D"/><rect x="29.94" y="9.40" width="4.99" height="15.60" fill="#3BAA8E"/><rect x="33.79" y="2.50" width="1.2" height="22.50" fill="#fff" fill-opacity="0.4"/><rect x="34.93" y="3.20" width="4.99" height="8.90" fill="#F99B2D"/><rect x="34.93" y="12.10" width="4.99" height="12.90" fill="#3BAA8E"/><rect x="38.78" y="3.20" width="1.2" height="21.80" fill="#fff" fill-opacity="0.4"/><rect x="39.92" y="2.30" width="4.99" height="5.90" fill="#F99B2D"/><rect x="39.92" y="8.20" width="4.99" height="16.80" fill="#3BAA8E"/><rect x="43.77" y="2.30" width="1.2" height="22.70" fill="#fff" fill-opacity="0.4"/><rect x="44.91" y="3.80" width="4.99" height="8.30" fill="#F99B2D"/><rect x="44.91" y="12.10" width="4.99" height="12.90" fill="#3BAA8E"/><rect x="48.76" y="3.80" width="1.2" height="21.20" fill="#fff" fill-opacity="0.4"/><rect x="49.90" y="1.40" width="4.99" height="9.70" fill="#F99B2D"/><rect x="49.90" y="11.10" width="4.99" height="13.90" fill="#3BAA8E"/><rect x="53.75" y="1.40" width="1.2" height="23.60" fill="#fff" fill-opacity="0.4"/><rect x="54.89" y="5.20" width="4.99" height="6.60" fill="#F99B2D"/><rect x="54.89" y="11.80" width="4.99" height="13.20" fill="#3BAA8E"/><rect x="58.74" y="5.20" width="1.2" height="19.80" fill="#fff" fill-opacity="0.4"/><rect x="59.88" y="1.90" width="4.99" height="6.30" fill="#F99B2D"/><rect x="59.88" y="8.20" width="4.99" height="16.80" fill="#3BAA8E"/><rect x="63.73" y="1.90" width="1.2" height="23.10" fill="#fff" fill-opacity="0.4"/><rect x="64.87" y="4.10" width="4.99" height="8.00" fill="#F99B2D"/><rect x="64.87" y="12.10" width="4.99" height="12.90" fill="#3BAA8E"/><rect x="68.72" y="4.10" width="1.2" height="20.90" fill="#fff" fill-opacity="0.4"/><rect x="69.86" y="3.20" width="4.99" height="7.40" fill="#F99B2D"/><rect x="69.86" y="10.60" width="4.99" height="14.40" fill="#3BAA8E"/></svg>
<div class="a mono" style="left:564px;top:544.2px">27.239.147.47 - - [<b>2018</b>-<b>07</b>-23T00:00:00.000Z] "<b>GET</b> /apm-server/apm-
server-6.3.2-windows-x86.zip <b>HTTP/1.1</b>" 200 9424 "-" "<b>Mozilla/5.0</b> (<b>X11;</b>
<b>Linux i686) AppleWebKit/534.24</b> (<b>KHTML, like Gecko) Chrome/11.0.696.50</b>
<b>Safari/534.24"</b></div>
<svg class="a" style="left:1119px;top:573.5px" width="17" height="17" viewBox="0 0 17 17"><circle cx="8.5" cy="8.5" r="7.3" fill="none" stroke="#0B5CAD" stroke-width="1.1"/><path d="M8.5 4.5v8M4.5 8.5h8" stroke="#0B5CAD" stroke-width="1.1"/></svg>
<svg class="a" style="left:1151px;top:573.5px" width="17" height="17" viewBox="0 0 17 17"><circle cx="8.5" cy="8.5" r="7.3" fill="none" stroke="#0B5CAD" stroke-width="1.1"/><path d="M4.5 8.5h8" stroke="#0B5CAD" stroke-width="1.1"/></svg>
<div class="a" style="left:308px;top:626.0px;width:866px;height:1px;background:#D3DAE6"></div>
<div class="a" style="left:312px;top:653px;width:16px;height:16px;border-radius:3px;border:1px solid #7D828C;background:#fff"></div>
<svg class="a" style="left:350px;top:652.9px" width="12" height="16" viewBox="0 0 12 16"><path d="M2.8 2.2 L8.6 8 L2.8 13.8" fill="none" stroke="#0B5CAD" stroke-width="1.3"/></svg>
<div class="t" style="left:384.5px;top:654.9px;font-size:12.6px;letter-spacing:0.3px;color:#282C35">490</div>
<svg class="a" style="left:469px;top:647.8px" width="76" height="25" viewBox="0 0 76 25"><rect x="0.00" y="4.10" width="4.99" height="5.40" fill="#F99B2D"/><rect x="0.00" y="9.50" width="4.99" height="15.50" fill="#3BAA8E"/><rect x="3.85" y="4.10" width="1.2" height="20.90" fill="#fff" fill-opacity="0.4"/><rect x="4.99" y="1.40" width="4.99" height="7.80" fill="#F99B2D"/><rect x="4.99" y="9.20" width="4.99" height="15.80" fill="#3BAA8E"/><rect x="8.84" y="1.40" width="1.2" height="23.60" fill="#fff" fill-opacity="0.4"/><rect x="9.98" y="3.20" width="4.99" height="5.00" fill="#F99B2D"/><rect x="9.98" y="8.20" width="4.99" height="16.80" fill="#3BAA8E"/><rect x="13.83" y="3.20" width="1.2" height="21.80" fill="#fff" fill-opacity="0.4"/><rect x="14.97" y="2.50" width="4.99" height="6.70" fill="#F99B2D"/><rect x="14.97" y="9.20" width="4.99" height="15.80" fill="#3BAA8E"/><rect x="18.82" y="2.50" width="1.2" height="22.50" fill="#fff" fill-opacity="0.4"/><rect x="19.96" y="2.20" width="4.99" height="6.40" fill="#F99B2D"/><rect x="19.96" y="8.60" width="4.99" height="16.40" fill="#3BAA8E"/><rect x="23.81" y="2.20" width="1.2" height="22.80" fill="#fff" fill-opacity="0.4"/><rect x="24.95" y="2.80" width="4.99" height="7.20" fill="#F99B2D"/><rect x="24.95" y="10.00" width="4.99" height="15.00" fill="#3BAA8E"/><rect x="28.80" y="2.80" width="1.2" height="22.20" fill="#fff" fill-opacity="0.4"/><rect x="29.94" y="2.50" width="4.99" height="7.80" fill="#F99B2D"/><rect x="29.94" y="10.30" width="4.99" height="14.70" fill="#3BAA8E"/><rect x="33.79" y="2.50" width="1.2" height="22.50" fill="#fff" fill-opacity="0.4"/><rect x="34.93" y="3.20" width="4.99" height="6.00" fill="#F99B2D"/><rect x="34.93" y="9.20" width="4.99" height="15.80" fill="#3BAA8E"/><rect x="38.78" y="3.20" width="1.2" height="21.80" fill="#fff" fill-opacity="0.4"/><rect x="39.92" y="2.30" width="4.99" height="8.90" fill="#F99B2D"/><rect x="39.92" y="11.20" width="4.99" height="13.80" fill="#3BAA8E"/><rect x="43.77" y="2.30" width="1.2" height="22.70" fill="#fff" fill-opacity="0.4"/><rect x="44.91" y="3.80" width="4.99" height="4.40" fill="#F99B2D"/><rect x="44.91" y="8.20" width="4.99" height="16.80" fill="#3BAA8E"/><rect x="48.76" y="3.80" width="1.2" height="21.20" fill="#fff" fill-opacity="0.4"/><rect x="49.90" y="1.40" width="4.99" height="5.60" fill="#F99B2D"/><rect x="49.90" y="7.00" width="4.99" height="18.00" fill="#3BAA8E"/><rect x="53.75" y="1.40" width="1.2" height="23.60" fill="#fff" fill-opacity="0.4"/><rect x="54.89" y="5.20" width="4.99" height="6.00" fill="#F99B2D"/><rect x="54.89" y="11.20" width="4.99" height="13.80" fill="#3BAA8E"/><rect x="58.74" y="5.20" width="1.2" height="19.80" fill="#fff" fill-opacity="0.4"/><rect x="59.88" y="1.90" width="4.99" height="6.50" fill="#F99B2D"/><rect x="59.88" y="8.40" width="4.99" height="16.60" fill="#3BAA8E"/><rect x="63.73" y="1.90" width="1.2" height="23.10" fill="#fff" fill-opacity="0.4"/><rect x="64.87" y="4.10" width="4.99" height="5.90" fill="#F99B2D"/><rect x="64.87" y="10.00" width="4.99" height="15.00" fill="#3BAA8E"/><rect x="68.72" y="4.10" width="1.2" height="20.90" fill="#fff" fill-opacity="0.4"/><rect x="69.86" y="3.20" width="4.99" height="6.80" fill="#F99B2D"/><rect x="69.86" y="10.00" width="4.99" height="15.00" fill="#3BAA8E"/></svg>
<div class="a mono" style="left:564px;top:633.2px">217.31.123.207 - - [<b>2018</b>-<b>07</b>-23T02:48:18.823Z] "<b>GET</b> /beats <b>HTTP/1.1</b>" 200
7624 "-" "<b>Mozilla/4.0</b> (<b>compatible; MSIE 6.0; Windows NT 5.1; SV1; .NET</b>
<b>CLR 1.1.4322)"</b></div>
<svg class="a" style="left:1119px;top:652.4px" width="17" height="17" viewBox="0 0 17 17"><circle cx="8.5" cy="8.5" r="7.3" fill="none" stroke="#0B5CAD" stroke-width="1.1"/><path d="M8.5 4.5v8M4.5 8.5h8" stroke="#0B5CAD" stroke-width="1.1"/></svg>
<svg class="a" style="left:1151px;top:652.4px" width="17" height="17" viewBox="0 0 17 17"><circle cx="8.5" cy="8.5" r="7.3" fill="none" stroke="#0B5CAD" stroke-width="1.1"/><path d="M4.5 8.5h8" stroke="#0B5CAD" stroke-width="1.1"/></svg>
<div class="a" style="left:308px;top:694.8px;width:866px;height:1px;background:#D3DAE6"></div>
<div class="a" style="left:312px;top:722px;width:16px;height:16px;border-radius:3px;border:1px solid #7D828C;background:#fff"></div>
<svg class="a" style="left:350px;top:721.9px" width="12" height="16" viewBox="0 0 12 16"><path d="M2.8 2.2 L8.6 8 L2.8 13.8" fill="none" stroke="#0B5CAD" stroke-width="1.3"/></svg>
<div class="t" style="left:384.5px;top:723.9px;font-size:12.6px;letter-spacing:0.3px;color:#282C35">43</div>
<svg class="a" style="left:469px;top:716.8px" width="76" height="25" viewBox="0 0 76 25"><rect x="0.00" y="4.10" width="4.99" height="0.80" fill="#F99B2D"/><rect x="0.00" y="4.90" width="4.99" height="20.10" fill="#3BAA8E"/><rect x="3.85" y="4.10" width="1.2" height="20.90" fill="#fff" fill-opacity="0.4"/><rect x="4.99" y="1.40" width="4.99" height="1.80" fill="#F99B2D"/><rect x="4.99" y="3.20" width="4.99" height="21.80" fill="#3BAA8E"/><rect x="8.84" y="1.40" width="1.2" height="23.60" fill="#fff" fill-opacity="0.4"/><rect x="9.98" y="3.20" width="4.99" height="0.90" fill="#F99B2D"/><rect x="9.98" y="4.10" width="4.99" height="20.90" fill="#3BAA8E"/><rect x="13.83" y="3.20" width="1.2" height="21.80" fill="#fff" fill-opacity="0.4"/><rect x="14.97" y="2.50" width="4.99" height="0.80" fill="#F99B2D"/><rect x="14.97" y="3.30" width="4.99" height="21.70" fill="#3BAA8E"/><rect x="18.82" y="2.50" width="1.2" height="22.50" fill="#fff" fill-opacity="0.4"/><rect x="19.96" y="2.20" width="4.99" height="0.10" fill="#F99B2D"/><rect x="19.96" y="2.30" width="4.99" height="22.70" fill="#3BAA8E"/><rect x="23.81" y="2.20" width="1.2" height="22.80" fill="#fff" fill-opacity="0.4"/><rect x="24.95" y="2.80" width="4.99" height="1.20" fill="#F99B2D"/><rect x="24.95" y="4.00" width="4.99" height="21.00" fill="#3BAA8E"/><rect x="28.80" y="2.80" width="1.2" height="22.20" fill="#fff" fill-opacity="0.4"/><rect x="29.94" y="2.50" width="4.99" height="0.80" fill="#F99B2D"/><rect x="29.94" y="3.30" width="4.99" height="21.70" fill="#3BAA8E"/><rect x="33.79" y="2.50" width="1.2" height="22.50" fill="#fff" fill-opacity="0.4"/><rect x="34.93" y="3.20" width="4.99" height="0.10" fill="#F99B2D"/><rect x="34.93" y="3.30" width="4.99" height="21.70" fill="#3BAA8E"/><rect x="38.78" y="3.20" width="1.2" height="21.80" fill="#fff" fill-opacity="0.4"/><rect x="39.92" y="2.30" width="4.99" height="1.70" fill="#F99B2D"/><rect x="39.92" y="4.00" width="4.99" height="21.00" fill="#3BAA8E"/><rect x="43.77" y="2.30" width="1.2" height="22.70" fill="#fff" fill-opacity="0.4"/><rect x="44.91" y="3.80" width="4.99" height="0.20" fill="#F99B2D"/><rect x="44.91" y="4.00" width="4.99" height="21.00" fill="#3BAA8E"/><rect x="48.76" y="3.80" width="1.2" height="21.20" fill="#fff" fill-opacity="0.4"/><rect x="49.90" y="1.40" width="4.99" height="0.00" fill="#F99B2D"/><rect x="49.90" y="1.40" width="4.99" height="23.60" fill="#3BAA8E"/><rect x="53.75" y="1.40" width="1.2" height="23.60" fill="#fff" fill-opacity="0.4"/><rect x="54.89" y="5.20" width="4.99" height="0.00" fill="#F99B2D"/><rect x="54.89" y="5.20" width="4.99" height="19.80" fill="#3BAA8E"/><rect x="58.74" y="5.20" width="1.2" height="19.80" fill="#fff" fill-opacity="0.4"/><rect x="59.88" y="1.90" width="4.99" height="0.40" fill="#F99B2D"/><rect x="59.88" y="2.30" width="4.99" height="22.70" fill="#3BAA8E"/><rect x="63.73" y="1.90" width="1.2" height="23.10" fill="#fff" fill-opacity="0.4"/><rect x="64.87" y="4.10" width="4.99" height="0.00" fill="#F99B2D"/><rect x="64.87" y="4.10" width="4.99" height="20.90" fill="#3BAA8E"/><rect x="68.72" y="4.10" width="1.2" height="20.90" fill="#fff" fill-opacity="0.4"/><rect x="69.86" y="3.20" width="4.99" height="0.40" fill="#F99B2D"/><rect x="69.86" y="3.60" width="4.99" height="21.40" fill="#3BAA8E"/></svg>
<div class="a mono" style="left:564px;top:702.0px">184.0.152.233 - - [<b>2018</b>-<b>07</b>-23T07:21:43.501Z] "<b>GET</b> /beats <b>HTTP/1.1</b>" 503
0 "-" "<b>Mozilla/5.0</b> (<b>X11; Linux x86_64; rv:6.0a1) Gecko/20110421</b>
<b>Firefox/6.0a1"</b></div>
<svg class="a" style="left:1119px;top:721.4px" width="17" height="17" viewBox="0 0 17 17"><circle cx="8.5" cy="8.5" r="7.3" fill="none" stroke="#0B5CAD" stroke-width="1.1"/><path d="M8.5 4.5v8M4.5 8.5h8" stroke="#0B5CAD" stroke-width="1.1"/></svg>
<svg class="a" style="left:1151px;top:721.4px" width="17" height="17" viewBox="0 0 17 17"><circle cx="8.5" cy="8.5" r="7.3" fill="none" stroke="#0B5CAD" stroke-width="1.1"/><path d="M4.5 8.5h8" stroke="#0B5CAD" stroke-width="1.1"/></svg></div></body></html>
